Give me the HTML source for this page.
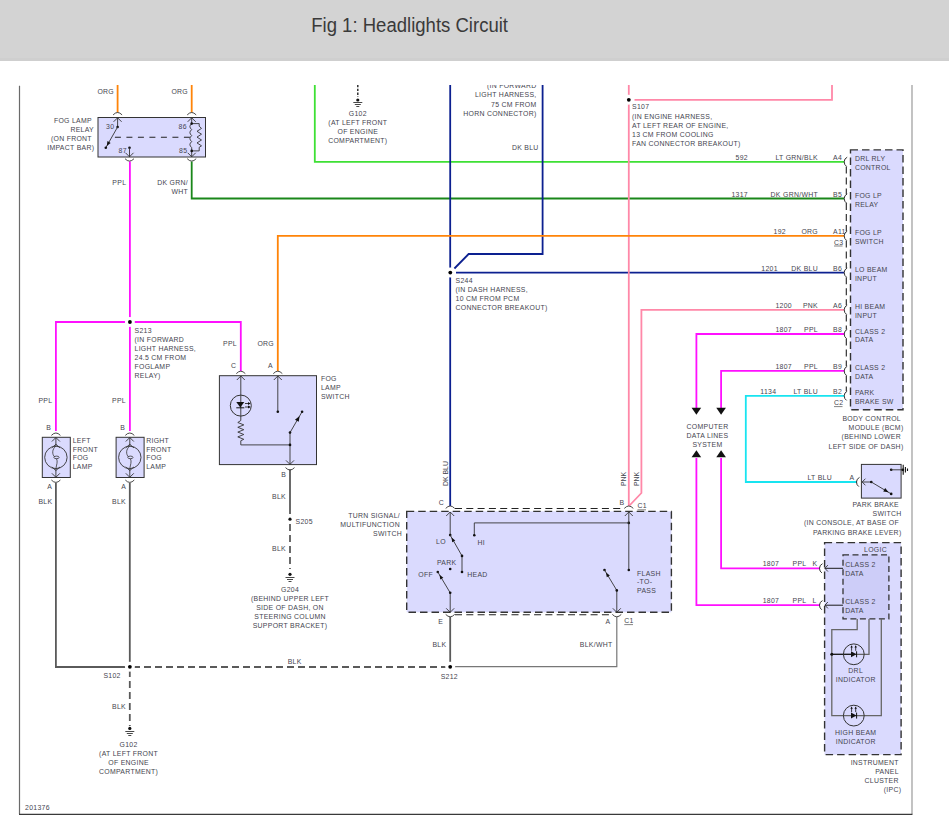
<!DOCTYPE html><html><head><meta charset="utf-8"><style>html,body{margin:0;padding:0;background:#fff;width:949px;height:824px;overflow:hidden}svg{display:block}text{font-family:"Liberation Sans",sans-serif;letter-spacing:0.3px}</style></head><body>
<svg width="949" height="824" viewBox="0 0 949 824">
<rect x="0" y="0" width="949" height="824" fill="#fff"/>
<rect x="0" y="0" width="949" height="61" fill="#d3d3d3"/>
<rect x="0" y="58" width="949" height="3" fill="#cfcfcf"/>
<text x="311.2" y="32" font-size="20" fill="#3a3a3a" style="letter-spacing:0" textLength="196.8" lengthAdjust="spacingAndGlyphs">Fig 1: Headlights Circuit</text>
<defs><clipPath id="cp"><rect x="0" y="85" width="949" height="739"/></clipPath></defs>
<g clip-path="url(#cp)">
<path d="M19.5,85.8 L19.5,814" fill="none" stroke="#6a6a6a" stroke-width="1.2" stroke-linecap="butt" stroke-linejoin="miter"/>
<path d="M912,85 L912,814" fill="none" stroke="#9a9a9a" stroke-width="1.2" stroke-linecap="butt" stroke-linejoin="miter"/>
<path d="M19,814.3 L912.5,814.3" fill="none" stroke="#3a3a3a" stroke-width="1.3" stroke-linecap="butt" stroke-linejoin="miter"/>
<path d="M117.6,80 L117.6,112.5" fill="none" stroke="#ff8408" stroke-width="1.8" stroke-linecap="butt" stroke-linejoin="miter"/>
<path d="M191.7,80 L191.7,112.5" fill="none" stroke="#ff8408" stroke-width="1.8" stroke-linecap="butt" stroke-linejoin="miter"/>
<path d="M129.9,161.5 L129.9,431" fill="none" stroke="#ff10ff" stroke-width="1.8" stroke-linecap="butt" stroke-linejoin="miter"/>
<path d="M191.7,161.5 L191.7,198.5 L844.2,198.5" fill="none" stroke="#1a871a" stroke-width="1.8" stroke-linecap="butt" stroke-linejoin="miter"/>
<path d="M314.8,80 L314.8,161.8 L844.2,161.8" fill="none" stroke="#3ee034" stroke-width="1.8" stroke-linecap="butt" stroke-linejoin="miter"/>
<path d="M450.2,80 L450.2,506" fill="none" stroke="#0c2090" stroke-width="1.8" stroke-linecap="butt" stroke-linejoin="miter"/>
<path d="M542.6,80 L542.6,254 L468.6,254 L454.4,268.5" fill="none" stroke="#0c2090" stroke-width="1.8" stroke-linecap="butt" stroke-linejoin="miter"/>
<path d="M456,272.6 L844.2,272.6" fill="none" stroke="#0c2090" stroke-width="1.8" stroke-linecap="butt" stroke-linejoin="miter"/>
<path d="M628.8,80 L628.8,506" fill="none" stroke="#ff88a8" stroke-width="1.8" stroke-linecap="butt" stroke-linejoin="miter"/>
<path d="M634.5,99.8 L832,99.8 L832,80" fill="none" stroke="#ff88a8" stroke-width="1.8" stroke-linecap="butt" stroke-linejoin="miter"/>
<path d="M844.2,309.8 L641.4,309.8 L641.4,493 L629.5,505.5" fill="none" stroke="#ff88a8" stroke-width="1.8" stroke-linecap="butt" stroke-linejoin="miter"/>
<path d="M277.8,371 L277.8,235.8 L844.2,235.8" fill="none" stroke="#ff8408" stroke-width="1.8" stroke-linecap="butt" stroke-linejoin="miter"/>
<path d="M55.9,431 L55.9,322 L240.8,322 L240.8,371" fill="none" stroke="#ff10ff" stroke-width="1.8" stroke-linecap="butt" stroke-linejoin="miter"/>
<path d="M844.2,334 L696.4,334 L696.4,408" fill="none" stroke="#ff10ff" stroke-width="1.8" stroke-linecap="butt" stroke-linejoin="miter"/>
<path d="M844.2,370.9 L721.1,370.9 L721.1,408" fill="none" stroke="#ff10ff" stroke-width="1.8" stroke-linecap="butt" stroke-linejoin="miter"/>
<path d="M696.4,458 L696.4,605.2 L820,605.2" fill="none" stroke="#ff10ff" stroke-width="1.8" stroke-linecap="butt" stroke-linejoin="miter"/>
<path d="M721.1,458 L721.1,568.3 L820,568.3" fill="none" stroke="#ff10ff" stroke-width="1.8" stroke-linecap="butt" stroke-linejoin="miter"/>
<path d="M844.2,395.8 L745.8,395.8 L745.8,482 L857,482" fill="none" stroke="#18e4f0" stroke-width="1.8" stroke-linecap="butt" stroke-linejoin="miter"/>
<path d="M55.9,483 L55.9,667 L127,667" fill="none" stroke="#5a5a5a" stroke-width="1.8" stroke-linecap="butt" stroke-linejoin="miter"/>
<path d="M129.8,483 L129.8,664" fill="none" stroke="#5a5a5a" stroke-width="1.8" stroke-linecap="butt" stroke-linejoin="miter"/>
<path d="M133,667 L446,667" fill="none" stroke="#5a5a5a" stroke-width="1.8" stroke-linecap="butt" stroke-linejoin="miter" stroke-dasharray="7,4"/>
<path d="M129.8,670 L129.8,726" fill="none" stroke="#5a5a5a" stroke-width="1.8" stroke-linecap="butt" stroke-linejoin="miter" stroke-dasharray="7,4"/>
<path d="M290,469.5 L290,514" fill="none" stroke="#5a5a5a" stroke-width="1.8" stroke-linecap="butt" stroke-linejoin="miter"/>
<path d="M290,524 L290,569" fill="none" stroke="#5a5a5a" stroke-width="1.8" stroke-linecap="butt" stroke-linejoin="miter" stroke-dasharray="7,4"/>
<path d="M450.2,617 L450.2,664" fill="none" stroke="#5a5a5a" stroke-width="1.8" stroke-linecap="butt" stroke-linejoin="miter"/>
<path d="M616.8,617 L616.8,666.6 L455,666.6" fill="none" stroke="#777" stroke-width="1.2" stroke-linecap="butt" stroke-linejoin="miter"/>
<circle cx="129.9" cy="322" r="5" fill="#fff"/>
<circle cx="129.9" cy="322" r="1.9" fill="#000"/>
<circle cx="450.3" cy="272.6" r="5" fill="#fff"/>
<circle cx="450.3" cy="272.6" r="1.9" fill="#000"/>
<circle cx="628.8" cy="99.8" r="5" fill="#fff"/>
<circle cx="628.8" cy="99.8" r="1.9" fill="#000"/>
<circle cx="129.9" cy="666.8" r="5" fill="#fff"/>
<circle cx="129.9" cy="666.8" r="1.9" fill="#000"/>
<circle cx="450.2" cy="666.8" r="5" fill="#fff"/>
<circle cx="450.2" cy="666.8" r="1.9" fill="#000"/>
<circle cx="290" cy="519.2" r="1.6" fill="#111"/>
<circle cx="290" cy="574.3" r="1.6" fill="#111"/>
<circle cx="129.8" cy="728.4" r="1.6" fill="#111"/>
<circle cx="357.8" cy="100" r="1.6" fill="#111"/>
<path d="M285.5,577.5 H294.5 M287,579.5 H293 M288.5,581.5 H291.5" stroke="#333" stroke-width="0.9"/>
<path d="M125.30000000000001,731.5 H134.3 M126.80000000000001,733.5 H132.8 M128.3,735.5 H131.3" stroke="#333" stroke-width="0.9"/>
<path d="M353.3,102.5 H362.3 M354.8,104.5 H360.8 M356.3,106.5 H359.3" stroke="#333" stroke-width="0.9"/>
<path d="M357.8,84.8 L357.8,97" fill="none" stroke="#222" stroke-width="1.4" stroke-linecap="butt" stroke-linejoin="miter" stroke-dasharray="2.4,1.5"/>
<rect x="98" y="117.5" width="107.5" height="39.5" fill="#dadafe" stroke="#333" stroke-width="1"/>
<path d="M113.1,114.89999999999999 Q117.6,110.1 122.1,114.89999999999999" fill="none" stroke="#333" stroke-width="0.9"/>
<path d="M187.2,114.89999999999999 Q191.7,110.1 196.2,114.89999999999999" fill="none" stroke="#333" stroke-width="0.9"/>
<path d="M125.0,158.70000000000002 Q129.5,163.5 134.0,158.70000000000002" fill="none" stroke="#333" stroke-width="0.9"/>
<path d="M187.2,158.70000000000002 Q191.7,163.5 196.2,158.70000000000002" fill="none" stroke="#333" stroke-width="0.9"/>
<path d="M113.6,121.8 L117.6,117.8 L121.6,121.8" fill="none" stroke="#333" stroke-width="0.9"/>
<path d="M187.7,121.8 L191.7,117.8 L195.7,121.8" fill="none" stroke="#333" stroke-width="0.9"/>
<path d="M125.5,152.8 L129.5,156.8 L133.5,152.8" fill="none" stroke="#333" stroke-width="0.9"/>
<path d="M187.7,152.8 L191.7,156.8 L195.7,152.8" fill="none" stroke="#333" stroke-width="0.9"/>
<path d="M117.6,117.8 L117.6,127" fill="none" stroke="#333" stroke-width="0.9" stroke-linecap="butt" stroke-linejoin="miter"/>
<circle cx="117.6" cy="127" r="1.3" fill="#111"/>
<path d="M117.6,127 L105.8,147.7" fill="none" stroke="#333" stroke-width="0.9" stroke-linecap="butt" stroke-linejoin="miter"/>
<path d="M106.80,145.90 L107.47,141.10 L110.60,142.89 Z" fill="#111"/>
<circle cx="105.8" cy="147.7" r="1.3" fill="#111"/>
<path d="M114.9,137.2 L191.7,137.2" fill="none" stroke="#222" stroke-width="1.1" stroke-linecap="butt" stroke-linejoin="miter" stroke-dasharray="6,5.5"/>
<circle cx="129.5" cy="147.7" r="1.3" fill="#111"/>
<path d="M129.5,147.7 L129.5,156.8" fill="none" stroke="#333" stroke-width="0.9" stroke-linecap="butt" stroke-linejoin="miter"/>
<path d="M191.7,117.8 V123.6 q-3.6,3 0,6 q-3.6,3 0,6 q-3.6,3 0,6 q-3.6,3 0,6 V156.8" fill="none" stroke="#333" stroke-width="0.9"/>
<path d="M191.7,123.6 H199.2 V126.2 l2.3,2.2 -4.5,2.9 4.5,2.9 -4.5,2.9 4.5,2.9 -4.5,2.9 4.5,2.9 -2.3,1.5 V150.9 H191.7" fill="none" stroke="#333" stroke-width="0.9"/>
<circle cx="191.7" cy="123.6" r="1.3" fill="#111"/>
<circle cx="191.7" cy="150.9" r="1.3" fill="#111"/>
<text x="114" y="94.30" text-anchor="end" font-size="6.9" fill="#45454f" >ORG</text>
<text x="188" y="94.30" text-anchor="end" font-size="6.9" fill="#45454f" >ORG</text>
<text x="91.9" y="122.90" text-anchor="end" font-size="6.9" fill="#45454f" >FOG LAMP</text>
<text x="94" y="131.90" text-anchor="end" font-size="6.9" fill="#45454f" >RELAY</text>
<text x="91.9" y="140.90" text-anchor="end" font-size="6.9" fill="#45454f" >(ON FRONT</text>
<text x="94.3" y="149.90" text-anchor="end" font-size="6.9" fill="#45454f" >IMPACT BAR)</text>
<text x="106" y="129.00" text-anchor="start" font-size="6.9" fill="#45454f" >30</text>
<text x="178.5" y="129.00" text-anchor="start" font-size="6.9" fill="#45454f" >86</text>
<text x="118.5" y="153.30" text-anchor="start" font-size="6.9" fill="#45454f" >87</text>
<text x="179" y="153.30" text-anchor="start" font-size="6.9" fill="#45454f" >85</text>
<text x="126.3" y="184.50" text-anchor="end" font-size="6.9" fill="#45454f" >PPL</text>
<text x="188" y="185.00" text-anchor="end" font-size="6.9" fill="#45454f" >DK GRN/</text>
<text x="188" y="193.50" text-anchor="end" font-size="6.9" fill="#45454f" >WHT</text>
<text x="357.8" y="116.10" text-anchor="middle" font-size="6.9" fill="#45454f" >G102</text>
<text x="357.8" y="125.20" text-anchor="middle" font-size="6.9" fill="#45454f" >(AT LEFT FRONT</text>
<text x="357.8" y="134.30" text-anchor="middle" font-size="6.9" fill="#45454f" >OF ENGINE</text>
<text x="357.8" y="143.40" text-anchor="middle" font-size="6.9" fill="#45454f" >COMPARTMENT)</text>
<text x="536.5" y="88.00" text-anchor="end" font-size="6.9" fill="#45454f" >(IN FORWARD</text>
<text x="536.5" y="97.40" text-anchor="end" font-size="6.9" fill="#45454f" >LIGHT HARNESS,</text>
<text x="536.5" y="106.80" text-anchor="end" font-size="6.9" fill="#45454f" >75 CM FROM</text>
<text x="536.5" y="116.20" text-anchor="end" font-size="6.9" fill="#45454f" >HORN CONNECTOR)</text>
<text x="538.6" y="150.00" text-anchor="end" font-size="6.9" fill="#45454f" >DK BLU</text>
<text x="632" y="109.30" text-anchor="start" font-size="6.9" fill="#45454f" >S107</text>
<text x="632" y="118.50" text-anchor="start" font-size="6.9" fill="#45454f" >(IN ENGINE HARNESS,</text>
<text x="632" y="127.70" text-anchor="start" font-size="6.9" fill="#45454f" >AT LEFT REAR OF ENGINE,</text>
<text x="632" y="136.90" text-anchor="start" font-size="6.9" fill="#45454f" >13 CM FROM COOLING</text>
<text x="632" y="146.10" text-anchor="start" font-size="6.9" fill="#45454f" >FAN CONNECTOR BREAKOUT)</text>
<text x="455.5" y="282.80" text-anchor="start" font-size="6.9" fill="#45454f" >S244</text>
<text x="455.5" y="291.90" text-anchor="start" font-size="6.9" fill="#45454f" >(IN DASH HARNESS,</text>
<text x="455.5" y="301.00" text-anchor="start" font-size="6.9" fill="#45454f" >10 CM FROM PCM</text>
<text x="455.5" y="310.10" text-anchor="start" font-size="6.9" fill="#45454f" >CONNECTOR BREAKOUT)</text>
<text x="134.5" y="333.10" text-anchor="start" font-size="6.9" fill="#45454f" >S213</text>
<text x="134.5" y="342.00" text-anchor="start" font-size="6.9" fill="#45454f" >(IN FORWARD</text>
<text x="134.5" y="350.90" text-anchor="start" font-size="6.9" fill="#45454f" >LIGHT HARNESS,</text>
<text x="134.5" y="359.80" text-anchor="start" font-size="6.9" fill="#45454f" >24.5 CM FROM</text>
<text x="134.5" y="368.70" text-anchor="start" font-size="6.9" fill="#45454f" >FOGLAMP</text>
<text x="134.5" y="377.60" text-anchor="start" font-size="6.9" fill="#45454f" >RELAY)</text>
<rect x="850.5" y="149.9" width="52.5" height="259.8" fill="#dadafe" stroke="#333" stroke-width="1.4" stroke-dasharray="7.5,4"/>
<path d="M846.3,166.4 L846.3,193.9" fill="none" stroke="#222" stroke-width="1.1" stroke-linecap="butt" stroke-linejoin="miter" stroke-dasharray="7,4"/>
<path d="M846.3,203.1 L846.3,231.20000000000002" fill="none" stroke="#222" stroke-width="1.1" stroke-linecap="butt" stroke-linejoin="miter" stroke-dasharray="7,4"/>
<path d="M846.3,240.4 L846.3,268.0" fill="none" stroke="#222" stroke-width="1.1" stroke-linecap="butt" stroke-linejoin="miter" stroke-dasharray="7,4"/>
<path d="M846.3,277.20000000000005 L846.3,305.2" fill="none" stroke="#222" stroke-width="1.1" stroke-linecap="butt" stroke-linejoin="miter" stroke-dasharray="7,4"/>
<path d="M846.3,314.40000000000003 L846.3,329.4" fill="none" stroke="#222" stroke-width="1.1" stroke-linecap="butt" stroke-linejoin="miter" stroke-dasharray="7,4"/>
<path d="M846.3,338.6 L846.3,366.29999999999995" fill="none" stroke="#222" stroke-width="1.1" stroke-linecap="butt" stroke-linejoin="miter" stroke-dasharray="7,4"/>
<path d="M846.3,375.5 L846.3,391.2" fill="none" stroke="#222" stroke-width="1.1" stroke-linecap="butt" stroke-linejoin="miter" stroke-dasharray="7,4"/>
<path d="M847.2,157.20000000000002 Q844.2,158.60000000000002 844.2,161.8 Q844.2,165.0 846.6,166.4" fill="none" stroke="#333" stroke-width="1"/>
<text x="748" y="159.80" text-anchor="end" font-size="6.9" fill="#45454f" >592</text>
<text x="818" y="159.80" text-anchor="end" font-size="6.9" fill="#45454f" >LT GRN/BLK</text>
<text x="833" y="159.80" text-anchor="start" font-size="6.9" fill="#45454f" >A4</text>
<text x="854.9" y="161.30" text-anchor="start" font-size="6.9" fill="#45454f" >DRL RLY</text>
<text x="854.9" y="170.10" text-anchor="start" font-size="6.9" fill="#45454f" >CONTROL</text>
<path d="M847.2,193.9 Q844.2,195.3 844.2,198.5 Q844.2,201.7 846.6,203.1" fill="none" stroke="#333" stroke-width="1"/>
<text x="748" y="196.50" text-anchor="end" font-size="6.9" fill="#45454f" >1317</text>
<text x="818" y="196.50" text-anchor="end" font-size="6.9" fill="#45454f" >DK GRN/WHT</text>
<text x="833" y="196.50" text-anchor="start" font-size="6.9" fill="#45454f" >B5</text>
<text x="854.9" y="198.00" text-anchor="start" font-size="6.9" fill="#45454f" >FOG LP</text>
<text x="854.9" y="206.80" text-anchor="start" font-size="6.9" fill="#45454f" >RELAY</text>
<path d="M847.2,231.20000000000002 Q844.2,232.60000000000002 844.2,235.8 Q844.2,239.0 846.6,240.4" fill="none" stroke="#333" stroke-width="1"/>
<text x="786" y="233.80" text-anchor="end" font-size="6.9" fill="#45454f" >192</text>
<text x="818" y="233.80" text-anchor="end" font-size="6.9" fill="#45454f" >ORG</text>
<text x="833" y="233.80" text-anchor="start" font-size="6.9" fill="#45454f" >A11</text>
<text x="854.9" y="235.30" text-anchor="start" font-size="6.9" fill="#45454f" >FOG LP</text>
<text x="854.9" y="244.10" text-anchor="start" font-size="6.9" fill="#45454f" >SWITCH</text>
<path d="M847.2,268.0 Q844.2,269.40000000000003 844.2,272.6 Q844.2,275.8 846.6,277.20000000000005" fill="none" stroke="#333" stroke-width="1"/>
<text x="777.8" y="270.60" text-anchor="end" font-size="6.9" fill="#45454f" >1201</text>
<text x="818" y="270.60" text-anchor="end" font-size="6.9" fill="#45454f" >DK BLU</text>
<text x="833" y="270.60" text-anchor="start" font-size="6.9" fill="#45454f" >B6</text>
<text x="854.9" y="272.10" text-anchor="start" font-size="6.9" fill="#45454f" >LO BEAM</text>
<text x="854.9" y="280.90" text-anchor="start" font-size="6.9" fill="#45454f" >INPUT</text>
<path d="M847.2,305.2 Q844.2,306.6 844.2,309.8 Q844.2,313.0 846.6,314.40000000000003" fill="none" stroke="#333" stroke-width="1"/>
<text x="792" y="307.80" text-anchor="end" font-size="6.9" fill="#45454f" >1200</text>
<text x="818" y="307.80" text-anchor="end" font-size="6.9" fill="#45454f" >PNK</text>
<text x="833" y="307.80" text-anchor="start" font-size="6.9" fill="#45454f" >A6</text>
<text x="854.9" y="309.30" text-anchor="start" font-size="6.9" fill="#45454f" >HI BEAM</text>
<text x="854.9" y="318.10" text-anchor="start" font-size="6.9" fill="#45454f" >INPUT</text>
<path d="M847.2,329.4 Q844.2,330.8 844.2,334 Q844.2,337.2 846.6,338.6" fill="none" stroke="#333" stroke-width="1"/>
<text x="792" y="332.00" text-anchor="end" font-size="6.9" fill="#45454f" >1807</text>
<text x="818" y="332.00" text-anchor="end" font-size="6.9" fill="#45454f" >PPL</text>
<text x="833" y="332.00" text-anchor="start" font-size="6.9" fill="#45454f" >B8</text>
<text x="854.9" y="333.50" text-anchor="start" font-size="6.9" fill="#45454f" >CLASS 2</text>
<text x="854.9" y="342.30" text-anchor="start" font-size="6.9" fill="#45454f" >DATA</text>
<path d="M847.2,366.29999999999995 Q844.2,367.7 844.2,370.9 Q844.2,374.09999999999997 846.6,375.5" fill="none" stroke="#333" stroke-width="1"/>
<text x="792" y="368.90" text-anchor="end" font-size="6.9" fill="#45454f" >1807</text>
<text x="818" y="368.90" text-anchor="end" font-size="6.9" fill="#45454f" >PPL</text>
<text x="833" y="368.90" text-anchor="start" font-size="6.9" fill="#45454f" >B9</text>
<text x="854.9" y="370.40" text-anchor="start" font-size="6.9" fill="#45454f" >CLASS 2</text>
<text x="854.9" y="379.20" text-anchor="start" font-size="6.9" fill="#45454f" >DATA</text>
<path d="M847.2,391.2 Q844.2,392.6 844.2,395.8 Q844.2,399.0 846.6,400.40000000000003" fill="none" stroke="#333" stroke-width="1"/>
<text x="776.4" y="393.80" text-anchor="end" font-size="6.9" fill="#45454f" >1134</text>
<text x="818" y="393.80" text-anchor="end" font-size="6.9" fill="#45454f" >LT BLU</text>
<text x="833" y="393.80" text-anchor="start" font-size="6.9" fill="#45454f" >B2</text>
<text x="854.9" y="395.30" text-anchor="start" font-size="6.9" fill="#45454f" >PARK</text>
<text x="854.9" y="404.10" text-anchor="start" font-size="6.9" fill="#45454f" >BRAKE SW</text>
<text x="834" y="244.50" text-anchor="start" font-size="6.9" fill="#45454f" >C3</text>
<path d="M834,246 L842.5,246" fill="none" stroke="#333" stroke-width="0.6" stroke-linecap="butt" stroke-linejoin="miter"/>
<text x="834" y="405.10" text-anchor="start" font-size="6.9" fill="#45454f" >C2</text>
<path d="M834,406.6 L842.5,406.6" fill="none" stroke="#333" stroke-width="0.6" stroke-linecap="butt" stroke-linejoin="miter"/>
<text x="901" y="421.00" text-anchor="end" font-size="6.9" fill="#45454f" >BODY CONTROL</text>
<text x="903.5" y="430.10" text-anchor="end" font-size="6.9" fill="#45454f" >MODULE (BCM)</text>
<text x="901" y="439.10" text-anchor="end" font-size="6.9" fill="#45454f" >(BEHIND LOWER</text>
<text x="903.5" y="448.80" text-anchor="end" font-size="6.9" fill="#45454f" >LEFT SIDE OF DASH)</text>
<path d="M691.6,407.8 L701.1999999999999,407.8 L696.4,414.8 Z" fill="#111"/>
<path d="M716.3000000000001,407.8 L725.9,407.8 L721.1,414.8 Z" fill="#111"/>
<path d="M691.6,457.2 L701.1999999999999,457.2 L696.4,450.2 Z" fill="#111"/>
<path d="M716.3000000000001,457.2 L725.9,457.2 L721.1,450.2 Z" fill="#111"/>
<text x="707.5" y="428.90" text-anchor="middle" font-size="6.9" fill="#45454f" >COMPUTER</text>
<text x="707.5" y="437.90" text-anchor="middle" font-size="6.9" fill="#45454f" >DATA LINES</text>
<text x="707.5" y="446.90" text-anchor="middle" font-size="6.9" fill="#45454f" >SYSTEM</text>
<rect x="861.4" y="464.4" width="39.7" height="33.7" fill="#dadafe" stroke="#333" stroke-width="1"/>
<path d="M859.5,477.4 Q856.5,478.8 856.5,482 Q856.5,485.2 858.9,486.6" fill="none" stroke="#333" stroke-width="1"/>
<path d="M865.4000000000001,478.7 L862.2,482 L865.4000000000001,485.3" fill="none" stroke="#333" stroke-width="0.9"/>
<path d="M862.2,482 L871.3,482" fill="none" stroke="#333" stroke-width="0.9" stroke-linecap="butt" stroke-linejoin="miter"/>
<circle cx="871.3" cy="482" r="1.3" fill="#111"/>
<path d="M871.3,482 L891.2,493.9" fill="none" stroke="#333" stroke-width="0.9" stroke-linecap="butt" stroke-linejoin="miter"/>
<path d="M888.50,492.30 L883.18,491.45 L885.24,488.02 Z" fill="#111"/>
<circle cx="891.2" cy="493.9" r="1.3" fill="#111"/>
<circle cx="891.2" cy="469.8" r="1.3" fill="#111"/>
<path d="M891.2,469.8 L903,469.8" fill="none" stroke="#333" stroke-width="0.9" stroke-linecap="butt" stroke-linejoin="miter"/>
<path d="M903.2,464.8 V474.8 M905.4,467 V472.6 M907.5,468.6 V471" fill="none" stroke="#111" stroke-width="1.1"/>
<circle cx="902.8" cy="469.8" r="1.4" fill="#111"/>
<text x="807.5" y="479.90" text-anchor="start" font-size="6.9" fill="#45454f" >LT BLU</text>
<text x="849.6" y="480.10" text-anchor="start" font-size="6.9" fill="#45454f" >A</text>
<text x="899" y="506.80" text-anchor="end" font-size="6.9" fill="#45454f" >PARK BRAKE</text>
<text x="901.5" y="515.90" text-anchor="end" font-size="6.9" fill="#45454f" >SWITCH</text>
<text x="899" y="525.30" text-anchor="end" font-size="6.9" fill="#45454f" >(IN CONSOLE, AT BASE OF</text>
<text x="901.5" y="534.50" text-anchor="end" font-size="6.9" fill="#45454f" >PARKING BRAKE LEVER)</text>
<rect x="824.6" y="542.6" width="76.5" height="212" fill="#dadafe" stroke="#333" stroke-width="1.4" stroke-dasharray="7.5,4"/>
<rect x="843" y="554.8" width="45.9" height="64.1" fill="#cdcdf8" stroke="#333" stroke-width="1.3" stroke-dasharray="6,3.5"/>
<text x="887" y="551.90" text-anchor="end" font-size="6.9" fill="#45454f" >LOGIC</text>
<path d="M822.5,563.6999999999999 Q819.5,565.0999999999999 819.5,568.3 Q819.5,571.5 821.9,572.9" fill="none" stroke="#333" stroke-width="1"/>
<path d="M827.9,565.0999999999999 L824.9,568.3 L827.9,571.5" fill="none" stroke="#333" stroke-width="0.9"/>
<path d="M824.9,568.3 L843,568.3" fill="none" stroke="#1a1a1a" stroke-width="1" stroke-linecap="butt" stroke-linejoin="miter"/>
<text x="779.2" y="566.30" text-anchor="end" font-size="6.9" fill="#45454f" >1807</text>
<text x="792.5" y="566.30" text-anchor="start" font-size="6.9" fill="#45454f" >PPL</text>
<text x="812.5" y="566.30" text-anchor="start" font-size="6.9" fill="#45454f" >K</text>
<path d="M822.5,600.6 Q819.5,602.0 819.5,605.2 Q819.5,608.4000000000001 821.9,609.8000000000001" fill="none" stroke="#333" stroke-width="1"/>
<path d="M827.9,602.0 L824.9,605.2 L827.9,608.4000000000001" fill="none" stroke="#333" stroke-width="0.9"/>
<path d="M824.9,605.2 L843,605.2" fill="none" stroke="#1a1a1a" stroke-width="1" stroke-linecap="butt" stroke-linejoin="miter"/>
<text x="779.2" y="603.20" text-anchor="end" font-size="6.9" fill="#45454f" >1807</text>
<text x="792.5" y="603.20" text-anchor="start" font-size="6.9" fill="#45454f" >PPL</text>
<text x="812.5" y="603.20" text-anchor="start" font-size="6.9" fill="#45454f" >L</text>
<text x="845.2" y="567.20" text-anchor="start" font-size="6.9" fill="#45454f" >CLASS 2</text>
<text x="845.2" y="575.80" text-anchor="start" font-size="6.9" fill="#45454f" >DATA</text>
<text x="845.2" y="603.90" text-anchor="start" font-size="6.9" fill="#45454f" >CLASS 2</text>
<text x="845.2" y="613.00" text-anchor="start" font-size="6.9" fill="#45454f" >DATA</text>
<path d="M857.2,619 L857.2,629.7 L831.8,629.7 L831.8,715.6 L881.3,715.6 L881.3,619" fill="none" stroke="#666" stroke-width="1.3" stroke-linecap="butt" stroke-linejoin="miter"/>
<path d="M869,619 L869,654.3 L831.8,654.3" fill="none" stroke="#666" stroke-width="1.3" stroke-linecap="butt" stroke-linejoin="miter"/>
<path d="M831.8,654.3 L852,654.3" fill="none" stroke="#111" stroke-width="1.1" stroke-linecap="butt" stroke-linejoin="miter"/>
<circle cx="831.8" cy="654.3" r="1.5" fill="#111"/>
<circle cx="853.8" cy="654.3" r="10.4" fill="none" stroke="#333" stroke-width="1"/>
<path d="M851.0,651.3 L856.4,654.3 L851.0,657.3 Z" fill="#111"/>
<path d="M856.5999999999999,651.3 V657.3" stroke="#111" stroke-width="1"/>
<path d="M851.5999999999999,650.8 L851.5999999999999,646.3 M855.6999999999999,650.8 L855.6999999999999,646.3" stroke="#111" stroke-width="0.8"/>
<path d="M850.4,647.5 L851.5999999999999,645.3 L852.8,647.5 Z M854.5,647.5 L855.6999999999999,645.3 L856.9,647.5 Z" fill="#111"/>
<circle cx="853.8" cy="715.6" r="10.4" fill="none" stroke="#333" stroke-width="1"/>
<path d="M851.0,712.6 L856.4,715.6 L851.0,718.6 Z" fill="#111"/>
<path d="M856.5999999999999,712.6 V718.6" stroke="#111" stroke-width="1"/>
<path d="M851.5999999999999,712.1 L851.5999999999999,707.6 M855.6999999999999,712.1 L855.6999999999999,707.6" stroke="#111" stroke-width="0.8"/>
<path d="M850.4,708.8000000000001 L851.5999999999999,706.6 L852.8,708.8000000000001 Z M854.5,708.8000000000001 L855.6999999999999,706.6 L856.9,708.8000000000001 Z" fill="#111"/>
<text x="855.7" y="673.30" text-anchor="middle" font-size="6.9" fill="#45454f" >DRL</text>
<text x="855.7" y="681.90" text-anchor="middle" font-size="6.9" fill="#45454f" >INDICATOR</text>
<text x="855.7" y="734.80" text-anchor="middle" font-size="6.9" fill="#45454f" >HIGH BEAM</text>
<text x="855.7" y="743.80" text-anchor="middle" font-size="6.9" fill="#45454f" >INDICATOR</text>
<text x="898.8" y="764.80" text-anchor="end" font-size="6.9" fill="#45454f" >INSTRUMENT</text>
<text x="898.8" y="773.80" text-anchor="end" font-size="6.9" fill="#45454f" >PANEL</text>
<text x="898.8" y="782.80" text-anchor="end" font-size="6.9" fill="#45454f" >CLUSTER</text>
<text x="901.3" y="792.00" text-anchor="end" font-size="6.9" fill="#45454f" >(IPC)</text>
<rect x="42.3" y="437.3" width="28" height="40.2" fill="#dadafe" stroke="#333" stroke-width="1"/>
<path d="M51.4,435.40000000000003 Q55.9,430.6 60.4,435.40000000000003" fill="none" stroke="#333" stroke-width="0.9"/>
<path d="M51.4,480.0 Q55.9,484.8 60.4,480.0" fill="none" stroke="#333" stroke-width="0.9"/>
<path d="M51.9,441.5 L55.9,437.5 L59.9,441.5" fill="none" stroke="#333" stroke-width="0.9"/>
<path d="M51.9,473.3 L55.9,477.3 L59.9,473.3" fill="none" stroke="#333" stroke-width="0.9"/>
<path d="M55.9,437.5 L55.9,446.2" fill="none" stroke="#333" stroke-width="0.9" stroke-linecap="butt" stroke-linejoin="miter"/>
<path d="M55.9,468.6 L55.9,477.3" fill="none" stroke="#333" stroke-width="0.9" stroke-linecap="butt" stroke-linejoin="miter"/>
<circle cx="55.9" cy="457.4" r="11.2" fill="none" stroke="#333" stroke-width="0.9"/>
<path d="M51.699999999999996,447.90000000000003 L55.9,444.3 L60.1,447.90000000000003" fill="none" stroke="#333" stroke-width="0.9"/>
<path d="M51.699999999999996,466.9 L55.9,470.5 L60.1,466.9" fill="none" stroke="#333" stroke-width="0.9"/>
<ellipse cx="56.5" cy="457.4" rx="2.6" ry="1.3" fill="none" stroke="#333" stroke-width="0.8"/>
<path d="M55.9,446.2 C51.9,449 51.9,454.5 54.699999999999996,457 M56.5,458.7 C58.1,461.5 56.4,465 55.9,468.6" fill="none" stroke="#333" stroke-width="0.8"/>
<rect x="116.1" y="437.3" width="28" height="40.2" fill="#dadafe" stroke="#333" stroke-width="1"/>
<path d="M125.30000000000001,435.40000000000003 Q129.8,430.6 134.3,435.40000000000003" fill="none" stroke="#333" stroke-width="0.9"/>
<path d="M125.30000000000001,480.0 Q129.8,484.8 134.3,480.0" fill="none" stroke="#333" stroke-width="0.9"/>
<path d="M125.80000000000001,441.5 L129.8,437.5 L133.8,441.5" fill="none" stroke="#333" stroke-width="0.9"/>
<path d="M125.80000000000001,473.3 L129.8,477.3 L133.8,473.3" fill="none" stroke="#333" stroke-width="0.9"/>
<path d="M129.8,437.5 L129.8,446.2" fill="none" stroke="#333" stroke-width="0.9" stroke-linecap="butt" stroke-linejoin="miter"/>
<path d="M129.8,468.6 L129.8,477.3" fill="none" stroke="#333" stroke-width="0.9" stroke-linecap="butt" stroke-linejoin="miter"/>
<circle cx="129.8" cy="457.4" r="11.2" fill="none" stroke="#333" stroke-width="0.9"/>
<path d="M125.60000000000001,447.90000000000003 L129.8,444.3 L134.0,447.90000000000003" fill="none" stroke="#333" stroke-width="0.9"/>
<path d="M125.60000000000001,466.9 L129.8,470.5 L134.0,466.9" fill="none" stroke="#333" stroke-width="0.9"/>
<ellipse cx="130.4" cy="457.4" rx="2.6" ry="1.3" fill="none" stroke="#333" stroke-width="0.8"/>
<path d="M129.8,446.2 C125.80000000000001,449 125.80000000000001,454.5 128.60000000000002,457 M130.4,458.7 C132.0,461.5 130.3,465 129.8,468.6" fill="none" stroke="#333" stroke-width="0.8"/>
<text x="48.8" y="430.10" text-anchor="middle" font-size="6.9" fill="#45454f" >B</text>
<text x="49.8" y="488.90" text-anchor="middle" font-size="6.9" fill="#45454f" >A</text>
<text x="122.7" y="430.10" text-anchor="middle" font-size="6.9" fill="#45454f" >B</text>
<text x="123.7" y="488.90" text-anchor="middle" font-size="6.9" fill="#45454f" >A</text>
<text x="72.7" y="443.00" text-anchor="start" font-size="6.9" fill="#45454f" >LEFT</text>
<text x="72.7" y="451.60" text-anchor="start" font-size="6.9" fill="#45454f" >FRONT</text>
<text x="72.7" y="460.20" text-anchor="start" font-size="6.9" fill="#45454f" >FOG</text>
<text x="72.7" y="468.80" text-anchor="start" font-size="6.9" fill="#45454f" >LAMP</text>
<text x="146.2" y="443.00" text-anchor="start" font-size="6.9" fill="#45454f" >RIGHT</text>
<text x="146.2" y="451.60" text-anchor="start" font-size="6.9" fill="#45454f" >FRONT</text>
<text x="146.2" y="460.20" text-anchor="start" font-size="6.9" fill="#45454f" >FOG</text>
<text x="146.2" y="468.80" text-anchor="start" font-size="6.9" fill="#45454f" >LAMP</text>
<text x="52.4" y="402.90" text-anchor="end" font-size="6.9" fill="#45454f" >PPL</text>
<text x="126" y="402.90" text-anchor="end" font-size="6.9" fill="#45454f" >PPL</text>
<text x="52.4" y="504.10" text-anchor="end" font-size="6.9" fill="#45454f" >BLK</text>
<text x="126" y="504.10" text-anchor="end" font-size="6.9" fill="#45454f" >BLK</text>
<text x="120.7" y="678.30" text-anchor="end" font-size="6.9" fill="#45454f" >S102</text>
<text x="126" y="708.70" text-anchor="end" font-size="6.9" fill="#45454f" >BLK</text>
<text x="287.7" y="663.90" text-anchor="start" font-size="6.9" fill="#45454f" >BLK</text>
<text x="128.6" y="747.10" text-anchor="middle" font-size="6.9" fill="#45454f" >G102</text>
<text x="128.6" y="756.00" text-anchor="middle" font-size="6.9" fill="#45454f" >(AT LEFT FRONT</text>
<text x="128.6" y="764.90" text-anchor="middle" font-size="6.9" fill="#45454f" >OF ENGINE</text>
<text x="128.6" y="773.80" text-anchor="middle" font-size="6.9" fill="#45454f" >COMPARTMENT)</text>
<text x="25" y="809.70" text-anchor="start" font-size="6.9" fill="#45454f" >201376</text>
<rect x="219.4" y="375.7" width="97.1" height="88.9" fill="#dadafe" stroke="#333" stroke-width="1"/>
<path d="M236.3,373.6 Q240.8,368.8 245.3,373.6" fill="none" stroke="#333" stroke-width="0.9"/>
<path d="M273.3,373.6 Q277.8,368.8 282.3,373.6" fill="none" stroke="#333" stroke-width="0.9"/>
<path d="M285.5,467.59999999999997 Q290,472.4 294.5,467.59999999999997" fill="none" stroke="#333" stroke-width="0.9"/>
<path d="M236.8,380 L240.8,376 L244.8,380" fill="none" stroke="#333" stroke-width="0.9"/>
<path d="M273.8,380 L277.8,376 L281.8,380" fill="none" stroke="#333" stroke-width="0.9"/>
<path d="M286,460.4 L290,464.4 L294,460.4" fill="none" stroke="#333" stroke-width="0.9"/>
<path d="M240.8,376 L240.8,420.5" fill="none" stroke="#333" stroke-width="0.9" stroke-linecap="butt" stroke-linejoin="miter"/>
<circle cx="240.8" cy="405.6" r="10.5" fill="none" stroke="#333" stroke-width="1"/>
<path d="M236.3,402 H244.3 L240.3,407.5 Z" fill="#111"/><path d="M236.3,407.8 H244.3" stroke="#111" stroke-width="1"/>
<path d="M245,403.5 H250 M245,407 H250" stroke="#111" stroke-width="0.8"/><path d="M250.5,403.5 L248,402 L248,405 Z M250.5,407 L248,405.5 L248,408.5 Z" fill="#111"/>
<path d="M240.8,420.5 l-3,2 6,2.4 -6,2.4 6,2.4 -6,2.4 6,2.4 -6,2.4 6,2.4 -3,1.4 V444.9 H290" fill="none" stroke="#333" stroke-width="0.9"/>
<path d="M277.8,376 L277.8,411.7" fill="none" stroke="#333" stroke-width="0.9" stroke-linecap="butt" stroke-linejoin="miter"/>
<circle cx="277.8" cy="411.7" r="1.3" fill="#111"/>
<path d="M290,432.6 L302.1,411.7" fill="none" stroke="#333" stroke-width="0.9" stroke-linecap="butt" stroke-linejoin="miter"/>
<path d="M299.60,416.00 L298.75,421.86 L294.94,419.66 Z" fill="#111"/>
<circle cx="302.1" cy="411.7" r="1.3" fill="#111"/>
<circle cx="290" cy="432.6" r="1.3" fill="#111"/>
<path d="M290,432.6 L290,464.4" fill="none" stroke="#333" stroke-width="0.9" stroke-linecap="butt" stroke-linejoin="miter"/>
<circle cx="290" cy="444.9" r="1.3" fill="#111"/>
<text x="237" y="346.00" text-anchor="end" font-size="6.9" fill="#45454f" >PPL</text>
<text x="274" y="346.00" text-anchor="end" font-size="6.9" fill="#45454f" >ORG</text>
<text x="233.6" y="368.00" text-anchor="middle" font-size="6.9" fill="#45454f" >C</text>
<text x="270.5" y="368.00" text-anchor="middle" font-size="6.9" fill="#45454f" >A</text>
<text x="283.7" y="476.50" text-anchor="middle" font-size="6.9" fill="#45454f" >B</text>
<text x="320.9" y="381.00" text-anchor="start" font-size="6.9" fill="#45454f" >FOG</text>
<text x="320.9" y="390.00" text-anchor="start" font-size="6.9" fill="#45454f" >LAMP</text>
<text x="320.9" y="399.00" text-anchor="start" font-size="6.9" fill="#45454f" >SWITCH</text>
<text x="286" y="499.20" text-anchor="end" font-size="6.9" fill="#45454f" >BLK</text>
<text x="295.6" y="524.00" text-anchor="start" font-size="6.9" fill="#45454f" >S205</text>
<text x="286" y="551.00" text-anchor="end" font-size="6.9" fill="#45454f" >BLK</text>
<text x="290" y="592.00" text-anchor="middle" font-size="6.9" fill="#45454f" >G204</text>
<text x="290" y="601.00" text-anchor="middle" font-size="6.9" fill="#45454f" >(BEHIND UPPER LEFT</text>
<text x="290" y="610.00" text-anchor="middle" font-size="6.9" fill="#45454f" >SIDE OF DASH, ON</text>
<text x="290" y="619.00" text-anchor="middle" font-size="6.9" fill="#45454f" >STEERING COLUMN</text>
<text x="290" y="628.00" text-anchor="middle" font-size="6.9" fill="#45454f" >SUPPORT BRACKET)</text>
<rect x="406.7" y="511.4" width="264.7" height="100.9" fill="#dadafe" stroke="#333" stroke-width="1.4" stroke-dasharray="7.5,4"/>
<text x="400" y="518.10" text-anchor="end" font-size="6.9" fill="#45454f" >TURN SIGNAL/</text>
<text x="400" y="527.10" text-anchor="end" font-size="6.9" fill="#45454f" >MULTIFUNCTION</text>
<text x="402" y="536.10" text-anchor="end" font-size="6.9" fill="#45454f" >SWITCH</text>
<path d="M455,508.5 L624.5,508.5" fill="none" stroke="#222" stroke-width="1.1" stroke-linecap="butt" stroke-linejoin="miter" stroke-dasharray="7,4.3"/>
<path d="M455,614.8 L612,614.8" fill="none" stroke="#222" stroke-width="1.1" stroke-linecap="butt" stroke-linejoin="miter" stroke-dasharray="7,4.3"/>
<path d="M445.7,508.40000000000003 Q450.2,503.6 454.7,508.40000000000003" fill="none" stroke="#333" stroke-width="0.9"/>
<path d="M624.3,508.40000000000003 Q628.8,503.6 633.3,508.40000000000003" fill="none" stroke="#333" stroke-width="0.9"/>
<path d="M445.7,614.4 Q450.2,619.2 454.7,614.4" fill="none" stroke="#333" stroke-width="0.9"/>
<path d="M612.3,614.4 Q616.8,619.2 621.3,614.4" fill="none" stroke="#333" stroke-width="0.9"/>
<path d="M446.2,516 L450.2,512 L454.2,516" fill="none" stroke="#333" stroke-width="0.9"/>
<path d="M624.8,516 L628.8,512 L632.8,516" fill="none" stroke="#333" stroke-width="0.9"/>
<path d="M446.2,608.3 L450.2,612.3 L454.2,608.3" fill="none" stroke="#333" stroke-width="0.9"/>
<path d="M612.8,608.3 L616.8,612.3 L620.8,608.3" fill="none" stroke="#333" stroke-width="0.9"/>
<path d="M450.2,512 L450.2,535.1" fill="none" stroke="#333" stroke-width="0.9" stroke-linecap="butt" stroke-linejoin="miter"/>
<circle cx="450.2" cy="535.1" r="1.3" fill="#111"/>
<path d="M450.2,535.1 L462,555.9 L462,572" fill="none" stroke="#333" stroke-width="0.9" stroke-linecap="butt" stroke-linejoin="miter"/>
<path d="M451.50,537.50 L455.29,540.52 L452.17,542.30 Z" fill="#111"/>
<circle cx="462" cy="555.9" r="1.3" fill="#111"/>
<circle cx="462" cy="572" r="1.3" fill="#111"/>
<circle cx="450.2" cy="569" r="1.3" fill="#111"/>
<path d="M474.3,535.3 L474.3,522.9 L628.8,522.9" fill="none" stroke="#333" stroke-width="0.9" stroke-linecap="butt" stroke-linejoin="miter"/>
<circle cx="474.3" cy="535.3" r="1.3" fill="#111"/>
<circle cx="628.8" cy="522.9" r="1.3" fill="#111"/>
<path d="M628.8,512 L628.8,570" fill="none" stroke="#333" stroke-width="0.9" stroke-linecap="butt" stroke-linejoin="miter"/>
<circle cx="628.8" cy="570" r="1.3" fill="#111"/>
<circle cx="437.8" cy="572" r="1.3" fill="#111"/>
<path d="M450.2,612.3 L450.2,592.8 L437.8,572" fill="none" stroke="#333" stroke-width="0.9" stroke-linecap="butt" stroke-linejoin="miter"/>
<path d="M439.50,574.80 L443.35,577.75 L440.25,579.59 Z" fill="#111"/>
<circle cx="450.2" cy="592.8" r="1.3" fill="#111"/>
<circle cx="604.5" cy="570" r="1.3" fill="#111"/>
<path d="M616.8,612.3 L616.8,590.4 L604.5,570" fill="none" stroke="#333" stroke-width="0.9" stroke-linecap="butt" stroke-linejoin="miter"/>
<path d="M606.00,572.50 L609.87,575.42 L606.78,577.28 Z" fill="#111"/>
<circle cx="616.8" cy="590.4" r="1.3" fill="#111"/>
<text x="441.5" y="505.10" text-anchor="middle" font-size="6.9" fill="#45454f" >C</text>
<text x="622" y="505.30" text-anchor="middle" font-size="6.9" fill="#45454f" >B</text>
<text x="637.5" y="508.20" text-anchor="start" font-size="6.9" fill="#45454f" >C1</text>
<path d="M637.5,509.8 L646,509.8" fill="none" stroke="#333" stroke-width="0.6" stroke-linecap="butt" stroke-linejoin="miter"/>
<text x="440.7" y="624.20" text-anchor="middle" font-size="6.9" fill="#45454f" >E</text>
<text x="608" y="624.20" text-anchor="middle" font-size="6.9" fill="#45454f" >A</text>
<text x="624.3" y="623.00" text-anchor="start" font-size="6.9" fill="#45454f" >C1</text>
<path d="M624.3,624.6 L633,624.6" fill="none" stroke="#333" stroke-width="0.6" stroke-linecap="butt" stroke-linejoin="miter"/>
<text x="436" y="544.10" text-anchor="start" font-size="6.9" fill="#45454f" >LO</text>
<text x="477.5" y="545.00" text-anchor="start" font-size="6.9" fill="#45454f" >HI</text>
<text x="436.9" y="565.20" text-anchor="start" font-size="6.9" fill="#45454f" >PARK</text>
<text x="418.3" y="577.00" text-anchor="start" font-size="6.9" fill="#45454f" >OFF</text>
<text x="467.3" y="577.00" text-anchor="start" font-size="6.9" fill="#45454f" >HEAD</text>
<text x="637" y="575.80" text-anchor="start" font-size="6.9" fill="#45454f" >FLASH</text>
<text x="637" y="584.40" text-anchor="start" font-size="6.9" fill="#45454f" >-TO-</text>
<text x="637" y="593.00" text-anchor="start" font-size="6.9" fill="#45454f" >PASS</text>
<text x="446.4" y="646.80" text-anchor="end" font-size="6.9" fill="#45454f" >BLK</text>
<text x="612.5" y="646.80" text-anchor="end" font-size="6.9" fill="#45454f" >BLK/WHT</text>
<text x="449.3" y="679.20" text-anchor="middle" font-size="6.9" fill="#45454f" >S212</text>
<text transform="translate(448.3,486) rotate(-90)" font-size="6.9" fill="#45454f" style="letter-spacing:0">DK BLU</text>
<text transform="translate(626.3,486) rotate(-90)" font-size="6.9" fill="#45454f" style="letter-spacing:0">PNK</text>
<text transform="translate(638.8,486) rotate(-90)" font-size="6.9" fill="#45454f" style="letter-spacing:0">PNK</text>
</g>
</svg></body></html>
